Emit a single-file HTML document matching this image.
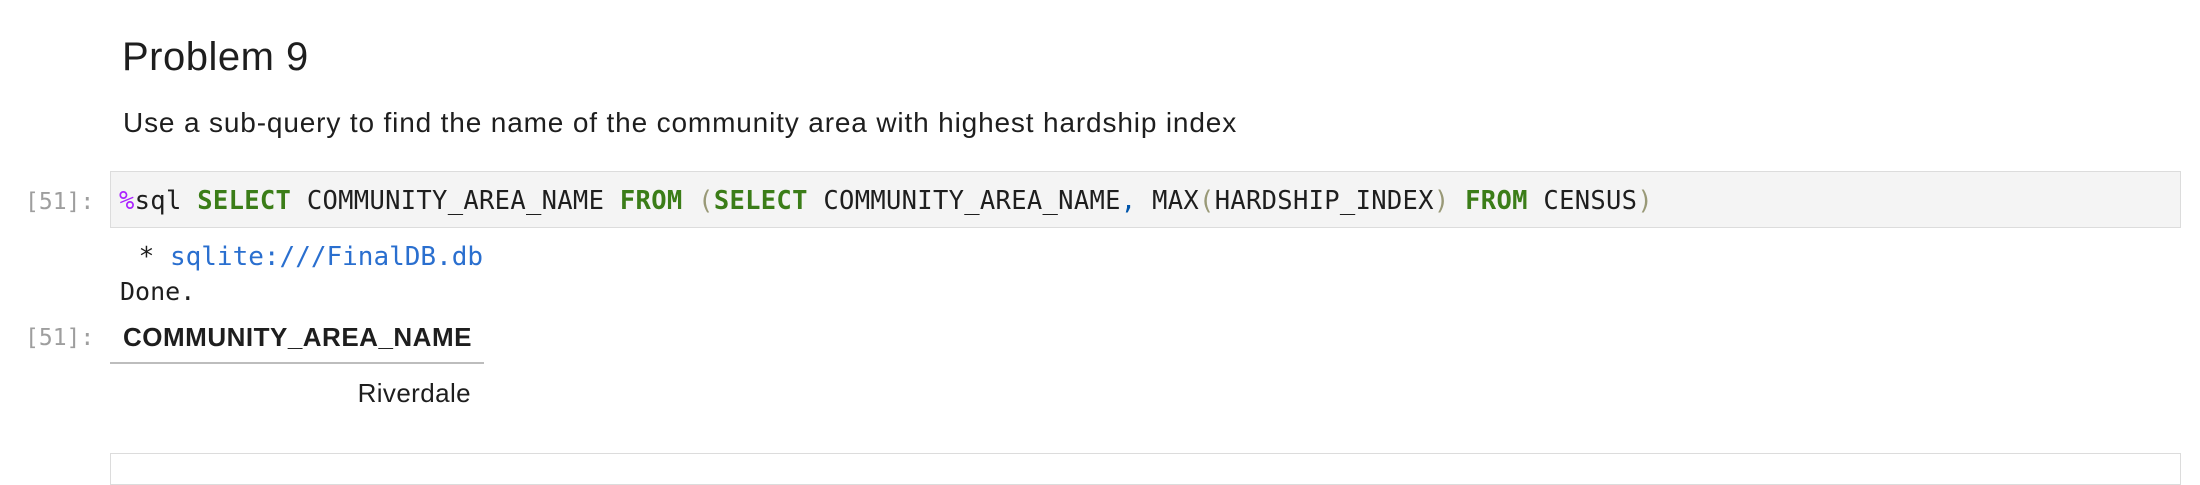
<!DOCTYPE html>
<html><head><meta charset="utf-8"><style>
body{margin:0;width:2200px;height:466px;background:#fff;position:relative;overflow:hidden;font-family:"Liberation Sans",sans-serif;color:#1e1e1e}
.a{position:absolute;white-space:pre}
.m{font-family:"DejaVu Sans Mono","Liberation Mono",monospace}
.k{color:#3b7d18;font-weight:bold}
.p{color:#999977}
</style></head><body>
<div class="a" style="left:122px;top:34px;font-size:40px;line-height:46px;letter-spacing:0.5px">Problem 9</div>
<div class="a" style="left:123px;top:107px;font-size:28px;line-height:32px;letter-spacing:0.85px">Use a sub-query to find the name of the community area with highest hardship index</div>
<div class="a m" style="left:25px;top:189px;font-size:23px;color:#9e9e9e">[51]:</div>
<div class="a" style="left:110px;top:171px;width:2069px;height:55px;background:#f4f4f4;border:1px solid #dcdcdc"></div>
<div class="a m" style="left:119px;top:186px;font-size:25.5px;line-height:30px;letter-spacing:0.3px"><span style="color:#aa22ff">%</span>sql <span class="k">SELECT</span> COMMUNITY_AREA_NAME <span class="k">FROM</span> <span class="p">(</span><span class="k">SELECT</span> COMMUNITY_AREA_NAME<span style="color:#0055aa">,</span> MAX<span class="p">(</span>HARDSHIP_INDEX<span class="p">)</span> <span class="k">FROM</span> CENSUS<span class="p">)</span></div>
<div class="a m" style="left:123px;top:241px;font-size:26px;line-height:32px"> * <span style="color:#2a6fcf">sqlite:///FinalDB.db</span></div>
<div class="a m" style="left:120px;top:276px;font-size:25px;line-height:32px">Done.</div>
<div class="a m" style="left:25px;top:325px;font-size:23px;color:#9e9e9e">[51]:</div>
<div class="a" style="left:123px;top:322px;font-size:26px;font-weight:bold;line-height:30px;letter-spacing:0.5px">COMMUNITY_AREA_NAME</div>
<div class="a" style="left:110px;top:362px;width:374px;height:2px;background:#bdbdbd"></div>
<div class="a" style="left:123px;top:378px;width:348px;text-align:right;font-size:26px;line-height:30px;letter-spacing:0.4px">Riverdale</div>
<div class="a" style="left:110px;top:453px;width:2069px;height:30px;border:1px solid #dcdcdc"></div>
</body></html>
